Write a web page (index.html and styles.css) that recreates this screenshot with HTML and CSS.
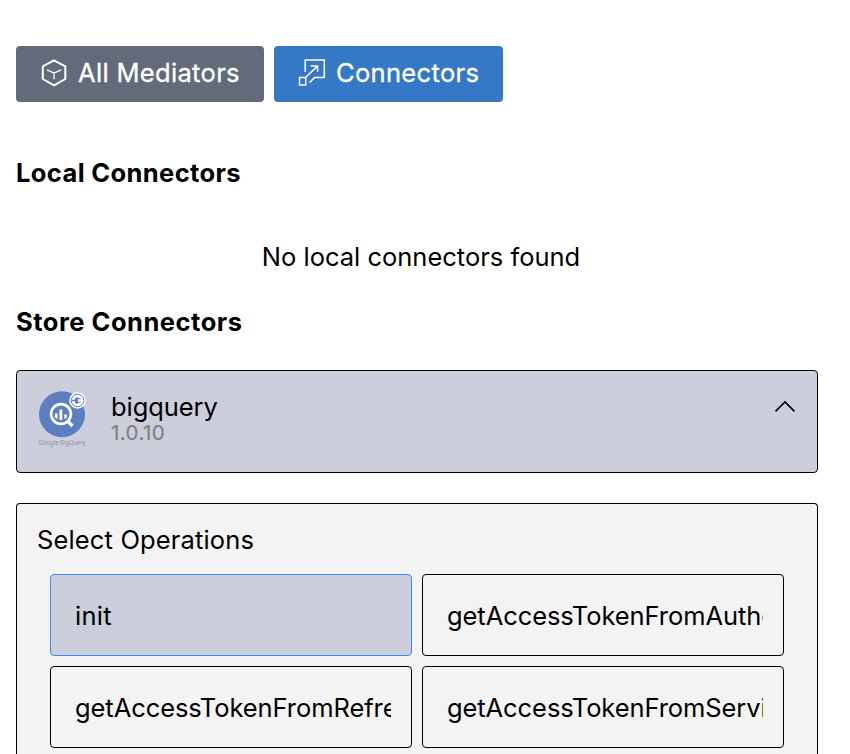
FILE: index.html
```
<!DOCTYPE html>
<html lang="en">
<head>
<meta charset="utf-8">
<title>Connectors</title>
<link rel="stylesheet" href="styles.css">
</head>
<body>
<main class="panel">
  <nav class="tabs">
    <button class="tab tab-mediators" type="button">
      <svg class="tab-icon" viewBox="0 0 28 28" fill="none" stroke="currentColor">
        <path stroke-width="2" stroke-linejoin="round" d="M14 1.300 25.300 7.300V20L14 26.300 2.800 20V7.300Z"/>
        <path stroke-width="1.300" d="M7 10.800 14 14 21.200 10.800M14 14V20.200"/>
      </svg>
      <span class="label">All Mediators</span>
    </button>
    <button class="tab tab-connectors" type="button">
      <svg class="tab-icon" viewBox="0 0 28 28" fill="none" stroke="currentColor" stroke-width="1.500">
        <path d="M7.200 13V1H26.300V18.600H16.500L11.500 23.800M1.500 18.500H7.700V26.100H1.500ZM7.500 18.500 19.500 7.100M12.800 6.900H19.600V12.800"/>
      </svg>
      <span class="label">Connectors</span>
    </button>
  </nav>

  <h2 class="heading">Local Connectors</h2>
  <p class="empty">No local connectors found</p>
  <h2 class="heading heading-store">Store Connectors</h2>

  <section class="connector">
    <svg class="logo" viewBox="0 0 50 60">
      <circle cx="25" cy="25.300" r="23" fill="#5e7fbf"/>
      <circle cx="40.500" cy="11.500" r="8.300" fill="#fff"/>
      <circle cx="40.500" cy="11.500" r="6.300" fill="none" stroke="#5e7fbf" stroke-width="1"/>
      <path fill="#5e7fbf" d="M38 9.500Q38.500 8.300 41 8.300V9.200H43.500V10.300H41V12.700H43.500V13.800H41V14.700Q38.500 14.700 38 13.500V12.200H34.500V10.800H38Z"/>
      <circle cx="24" cy="25" r="9.900" fill="none" stroke="#fff" stroke-width="2.700"/>
      <path stroke="#fff" stroke-width="3.200" d="M30.500 32 35.500 37"/>
      <path fill="#fff" d="M18 24.500H20.500V30L18 28.500ZM22.500 20.500H25.300V31H22.500ZM27.300 25.500H29.800V28.500L27.300 30Z"/>
      <text class="logo-text" x="1.500" y="56" textLength="47">Google BigQuery</text>
    </svg>
    <div class="info">
      <div class="name">bigquery</div>
      <div class="version">1.0.10</div>
    </div>
    <svg class="chevron" viewBox="0 0 22 14" fill="none" stroke="#000" stroke-width="1.700"><path d="M1.500 11.300 11 2 20.500 11.300"/></svg>
  </section>

  <section class="operations">
    <div class="select">Select Operations</div>
    <div class="grid">
      <div class="op op-active"><div class="op-name">init</div></div>
      <div class="op"><div class="op-name">getAccessTokenFromAuthorizationCode</div></div>
      <div class="op"><div class="op-name">getAccessTokenFromRefreshToken</div></div>
      <div class="op"><div class="op-name op-service">getAccessTokenFromServiceAccount</div></div>
    </div>
  </section>
</main>
</body>
</html>
```
FILE: styles.css
```
* { box-sizing: border-box; }
html, body { height: 100%; overflow: hidden; }
body {
  margin: 0;
  background: #fff;
  color: #000;
  font: 400 25.5px/32px Inter, sans-serif;
}
.panel {
  display: flex;
  flex-direction: column;
  width: 818px;
  height: 100%;
  padding: 46px 0 0 16px;
}
.tabs { display: flex; flex: none; gap: 10px; height: 56px; }
.tab {
  display: flex;
  align-items: center;
  gap: 10px;
  padding: 0 0 2px 24px;
  border: 0;
  border-radius: 4px;
  color: #fff;
  font: inherit;
  letter-spacing: 0.33px;
  white-space: nowrap;
}
.label { -webkit-text-stroke: 0.3px currentColor; }
.tab-mediators { width: 248px; background: #616b79; }
.tab-connectors { width: 229px; background: #3578c6; }
.tab-icon { width: 28px; height: 28px; flex: none; }
.heading { margin: 55px 0 0; font-size: 25.5px; line-height: 32px; font-weight: 700; letter-spacing: 0.38px; }
.heading-store { margin-top: 33px; letter-spacing: 0.52px; }
.empty { margin: 52px 0 0; padding-left: 8px; text-align: center; }
.connector {
  display: flex;
  flex: none;
  height: 103px;
  margin-top: 32px;
  padding: 18px 20px 0;
  border: 1px solid #000;
  border-radius: 4px;
  background: #cccedb;
}
.logo { width: 50px; height: 60px; }
.logo-text { font: 6.5px Roboto, sans-serif; fill: #96979f; }
.info { margin-left: 24px; flex: 1; padding-top: 2px; }
.name { letter-spacing: -0.08px; }
.version { color: #808080; font-size: 20.5px; line-height: 20px; letter-spacing: 0.45px; -webkit-text-stroke: 0.2px currentColor; }
.chevron { width: 22px; height: 14px; margin: 11px 1px 0 0; }
.operations {
  flex: 1;
  min-height: 0;
  overflow: hidden;
  margin-top: 30px;
  padding: 20px 33px 0;
  border: 1px solid #000;
  border-bottom: 0;
  border-radius: 4px 4px 0 0;
  background: #f3f3f3;
}
.select { margin-left: -13px; letter-spacing: 0.15px; }
.grid { display: grid; grid-template-columns: 362px 362px; gap: 10px; margin-top: 18px; }
.op { height: 82px; padding: 25px 20px 0 24px; border: 1px solid #000; border-radius: 4px; }
.op-active { border-color: #3b8eea; background: #cccedb; letter-spacing: 0.3px; }
.op-name { overflow: hidden; white-space: nowrap; }
.op:not(.op-active) .op-name { letter-spacing: -0.07px; }
.op .op-name.op-service { letter-spacing: -0.08px; }
```
